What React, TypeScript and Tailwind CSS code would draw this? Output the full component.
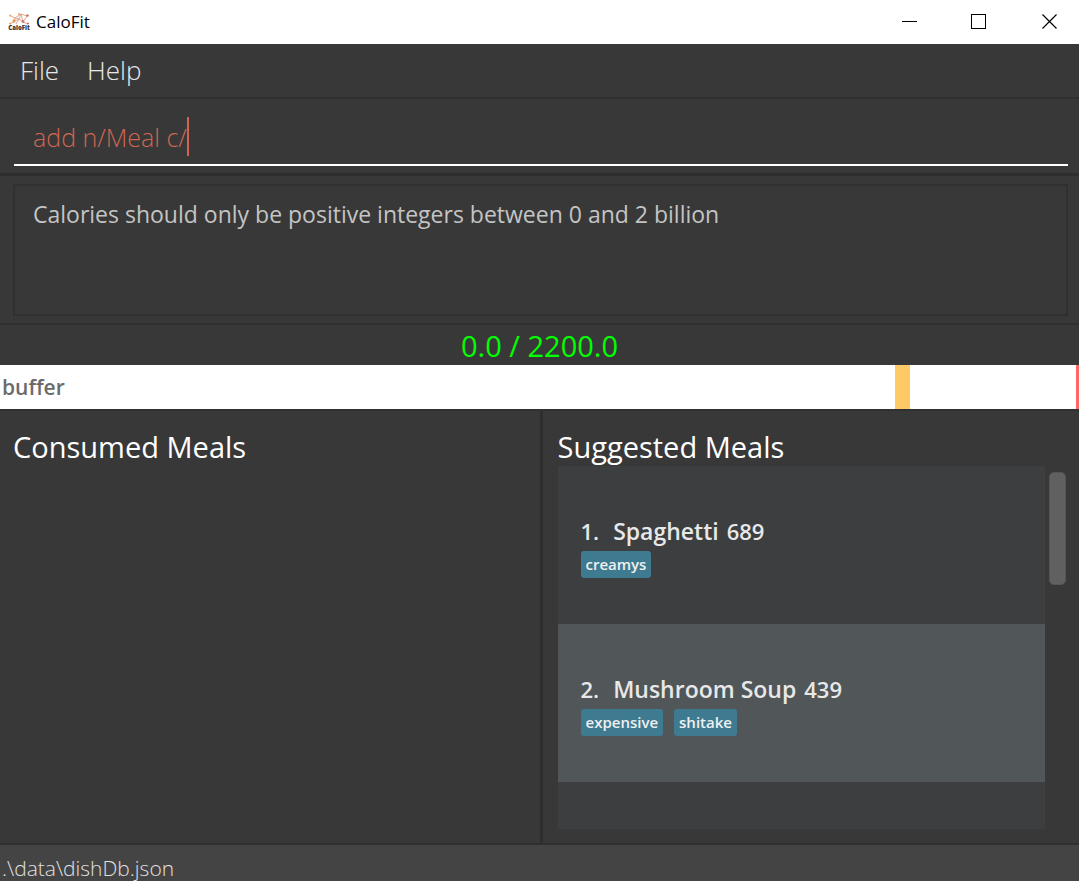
import { useState } from "react";

type Meal = { name: string; calories: number; tags: string[] };

const suggestedMeals: Meal[] = [
  { name: "Spaghetti", calories: 689, tags: ["creamys"] },
  { name: "Mushroom Soup", calories: 439, tags: ["expensive", "shitake"] },
];

function Logo() {
  return (
    <svg viewBox="0 0 22 20" className="h-5 w-[22px]" aria-hidden="true">
      <g stroke="#dc9274" strokeWidth="0.8" fill="none">
        <path d="M2 3.500 7 6l6-4 6 2M7 6l-1 3.500-4 2.500M6 9.500l5-2.500 4 3 4-6M13 2l2 8 5 2M11 7 8 12M7 6l4 1 2-5" />
      </g>
      <g fill="#e5a062">
        <circle cx="6" cy="9" r="1.700" />
        <circle cx="2.200" cy="3.500" r="1" />
        <circle cx="11" cy="2" r="1" />
        <circle cx="2" cy="11.500" r="1" />
      </g>
      <g fill="#c9705f">
        <circle cx="15" cy="9.500" r="1.300" />
        <circle cx="19.500" cy="3.500" r="1.200" />
        <circle cx="20" cy="11.500" r="1" />
      </g>
      <text x="11" y="18" textAnchor="middle" fontSize="6" fontWeight="800" fontFamily="Open Sans, sans-serif" fill="#333333">
        CaloFit
      </text>
    </svg>
  );
}

function TitleBar() {
  return (
    <header className="flex h-11 shrink-0 bg-white pl-2 text-black">
      <div className="flex flex-1 items-center gap-[6px]">
        <Logo />
        <h1 className="text-[17px]">CaloFit</h1>
      </div>
      <button aria-label="Minimize" className="flex h-[43px] w-[68px] items-center justify-center">
        <svg viewBox="0 0 15 15" className="size-[15px]" shapeRendering="crispEdges">
          <path d="M0 7.500h15" stroke="black" />
        </svg>
      </button>
      <button aria-label="Maximize" className="flex h-[43px] w-[70px] items-center justify-center">
        <svg viewBox="0 0 15 15" className="size-[15px]" shapeRendering="crispEdges">
          <path d="M.5.5h14v14H.5z" fill="none" stroke="black" />
        </svg>
      </button>
      <button aria-label="Close" className="flex h-[43px] w-[66px] items-center justify-center pl-[6px]">
        <svg viewBox="0 0 15 15" className="size-[15px]">
          <path d="m.5.5 14 14m0-14-14 14" stroke="black" strokeWidth="1.200" />
        </svg>
      </button>
    </header>
  );
}

function MealCard({ meal, index }: { meal: Meal; index: number }) {
  return (
    <li className="flex h-[158px] shrink-0 flex-col justify-center bg-[#3c3e3f] px-[23px] even:bg-[#515658]">
      <div className="flex h-[38px] items-center text-[22px] font-semibold text-[#e8e8e8]">
        <span className="mr-[14px]">{index}.</span>
        <span className="mr-2 text-[23px]">{meal.name}</span>
        <span>{meal.calories}</span>
      </div>
      <div className="flex gap-[11px]">
        {meal.tags.map((tag) => (
          <span key={tag} className="h-[27px] rounded-[3px] bg-[#3e7b91] px-[5px] text-[15px] leading-[27px] font-semibold text-[#f0f0f0]">
            {tag}
          </span>
        ))}
      </div>
    </li>
  );
}

export default function App() {
  const [command, setCommand] = useState("add n/Meal c/");

  return (
    <div className="flex h-screen flex-col bg-[#383838] font-['Open_Sans','Noto_Sans',sans-serif]">
      <TitleBar />

      <nav className="flex h-[55px] shrink-0 gap-7 border-b-2 border-[#303030] px-5 text-[26px] font-light text-[#e8e8e8]">
        <button>File</button>
        <button>Help</button>
      </nav>

      <section className="h-[77px] shrink-0 border-b-3 border-[#2e2e2e] pr-[11px] pl-[14px]">
        <div className="flex h-[67px] items-center border-b-2 border-white pt-[10px] pl-[19px] text-[25px] font-light text-[#d06651]">
          <input
            aria-label="Command"
            className="h-[39px] field-sizing-content bg-transparent outline-none"
            value={command}
            onChange={(e) => setCommand(e.target.value)}
          />
          <span className="h-[39px] w-[2px] bg-[#d06651]" />
        </div>
      </section>

      <section className="h-[149px] shrink-0 border-b-2 border-[#303030] pt-2 pr-[11px] pl-[13px]">
        <output className="block h-[132px] border-2 border-[#303030] px-[18px] pt-[10px] text-[23px] leading-9 text-[#c4c4c4]">
          Calories should only be positive integers between 0 and 2 billion
        </output>
      </section>

      <p className="h-10 shrink-0 text-center text-[29px] leading-[42px] text-[#00ff00]">0.0 / 2200.0</p>

      <div className="flex h-11 shrink-0 items-center bg-white">
        <span className="w-[calc(83%-1px)] pt-[2px] pl-[2px] text-[21px] font-semibold text-[#6b6b6b]">buffer</span>
        <span className="h-full w-[15px] bg-[#ffc966]" />
        <span className="ml-auto h-full w-[3px] bg-[#ff6666]" />
      </div>

      <main className="grid min-h-0 flex-1 grid-cols-2 border-y-2 border-[#303030] text-white">
        <section className="pt-[17px] pl-[13px]">
          <h2 className="text-[29px] leading-[38px]">Consumed Meals</h2>
        </section>
        <section className="flex min-h-0 flex-col border-l-3 border-[#2e2e2e] pt-[17px] pr-[13px] pb-[14px] pl-[15px]">
          <h2 className="text-[29px] leading-[38px]">Suggested Meals</h2>
          <div className="flex min-h-0 flex-1">
            <ul className="flex flex-1 flex-col overflow-hidden bg-[#3c3e3f]">
              {suggestedMeals.map((meal, i) => (
                <MealCard key={meal.name} meal={meal} index={i + 1} />
              ))}
            </ul>
            <div className="ml-1 w-[17px] pt-[6px]">
              <div className="h-[113px] rounded-[5px] border border-[#555555] bg-[#606060]" />
            </div>
          </div>
        </section>
      </main>

      <footer className="h-9 shrink-0 bg-[#444444] pl-[2px] text-[21px] leading-[46px] font-light text-[#e0e0e0]">
        .\data\dishDb.json
      </footer>
    </div>
  );
}
